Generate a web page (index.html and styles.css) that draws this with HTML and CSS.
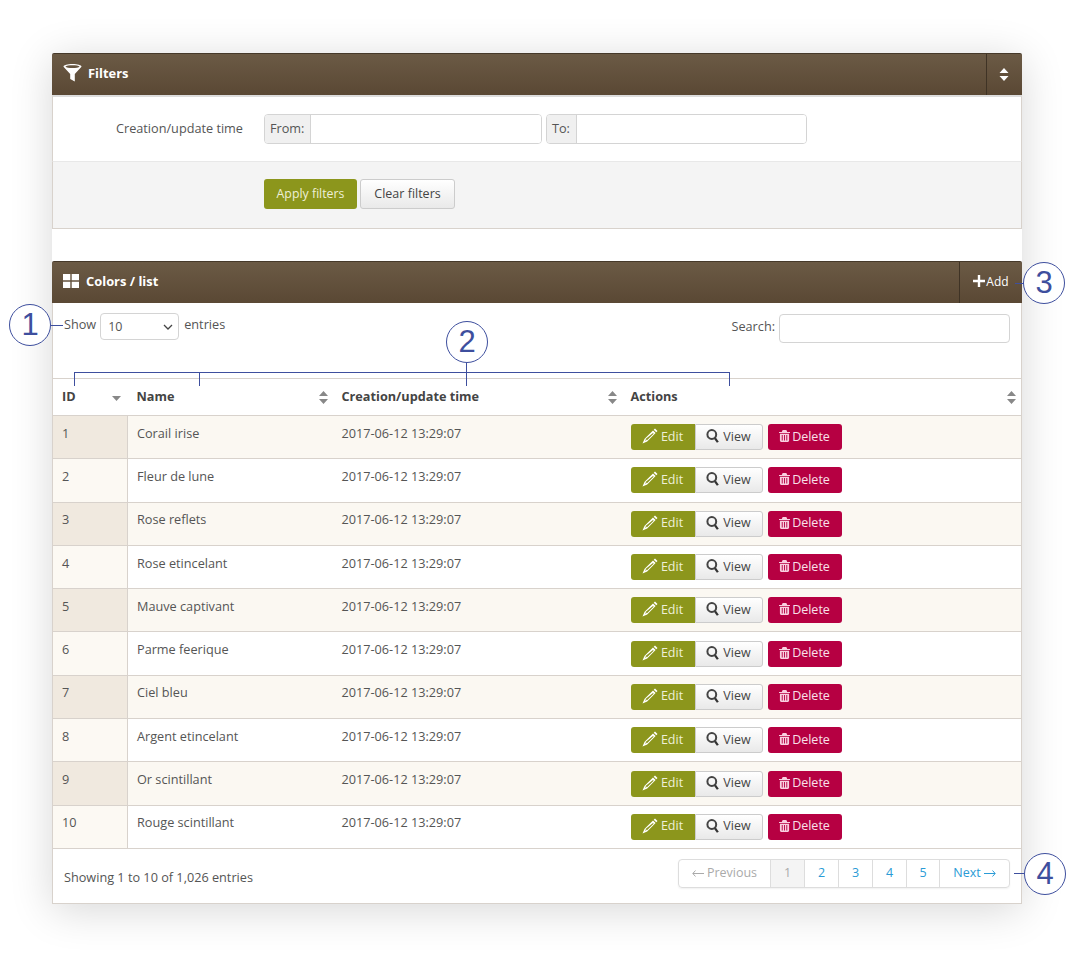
FILE: index.html
```html
<!DOCTYPE html>
<html lang="en">
<head>
    <meta charset="UTF-8">
    <title>Colors / list</title>
    <link rel="stylesheet" href="styles.css">
</head>
<body>
    <svg class="defs" width="0" height="0">
        <symbol id="i-sort" viewBox="0 0 9 13"><path d="M4.500 0 9 5H0zM4.500 13 0 8h9z"/></symbol>
        <symbol id="i-pencil" viewBox="0 0 16 16"><path d="M13 .5 15.500 3 14.300 4.300 11.700 1.800zM11 2.500 13.600 5 5.200 13.400 .5 15.500 2.600 10.800zM3.600 10.900 5 12.300 11.600 5.700 11 5.100zM2.900 12.900 4.400 12 3.800 11.400z" fill-rule="evenodd"/></symbol>
        <symbol id="i-search" viewBox="0 0 14 14"><circle cx="5.800" cy="5.500" r="4.400" fill="none" stroke="currentColor" stroke-width="2"/><path d="M8 9.800 10 8.700 12.800 12.700 10.900 13.800z"/></symbol>
        <symbol id="i-trash" viewBox="0 0 12 13"><path d="M4 0h4l1 2h3v1.300H0V2h3zM1 4h10v7.500c0 .8-.6 1.500-1.400 1.500H2.400C1.600 13 1 12.300 1 11.500zM3 5.500V11.500h1V5.500zM5.500 5.500V11.500h1V5.500zM8 5.500V11.500h1V5.500z" fill-rule="evenodd"/></symbol>
    </svg>

    <div class="page">
        <div class="panel">
            <div class="bar">
                <div class="bar-title">
                    <svg class="bar-icon" width="19" height="18" viewBox="0 0 19 18"><path d="M9.500 0C14.500 0 18.500 1.100 18.500 2.700L11.800 10V17.500L7.200 15V10L.5 2.700C.5 1.100 4.500 0 9.500 0zM9.500 1.300C6 1.300 3.300 1.800 2.400 2.700 3.300 3.600 6 4.100 9.500 4.100S15.700 3.600 16.600 2.700C15.700 1.800 13 1.300 9.500 1.300z" fill-rule="evenodd"/></svg>
                    Filters
                </div>
                <div class="bar-action toggle"><svg width="10" height="13"><use href="#i-sort"/></svg></div>
            </div>
            <div class="filter-row">
                <label class="filter-label">Creation/update time</label>
                <div class="input-group from">
                    <span class="addon">From:</span>
                    <input type="text">
                </div>
                <div class="input-group to">
                    <span class="addon">To:</span>
                    <input type="text">
                </div>
            </div>
            <div class="filter-actions">
                <button class="btn btn-olive btn-apply">Apply filters</button>
                <button class="btn btn-plain btn-clear">Clear filters</button>
            </div>
        </div>

        <div class="panel list-panel">
            <div class="bar">
                <div class="bar-title">
                    <svg class="bar-icon grid" width="16" height="14" viewBox="0 0 16 14"><path d="M0 0h7.300v6.300H0zM8.700 0H16v6.300H8.700zM0 7.700h7.300V14H0zM8.700 7.700H16V14H8.700z"/></svg>
                    Colors / list
                </div>
                <div class="bar-action add">
                    <svg width="12" height="12" viewBox="0 0 12 12"><path d="M4.800 0h2.400v4.800H12v2.400H7.200V12H4.800V7.200H0V4.800h4.800z"/></svg>
                    Add
                </div>
            </div>

            <div class="table-tools">
                <div class="length">
                    Show
                    <div class="fake-select">10
                        <svg width="10" height="6" viewBox="0 0 10 6"><path d="M1 1l4 4 4-4" fill="none" stroke="#444" stroke-width="1.300"/></svg>
                    </div>
                    entries
                </div>
                <div class="search">Search: <input type="text"></div>
            </div>

            <table class="list">
                <thead>
                    <tr>
                        <th class="col-id">ID<svg class="sort" width="9" height="13"><path d="M0 5h9L4.500 10z" fill="#888"/></svg></th>
                        <th class="col-name">Name<svg class="sort" width="9" height="13"><use href="#i-sort"/></svg></th>
                        <th class="col-time">Creation/update time<svg class="sort" width="9" height="13"><use href="#i-sort"/></svg></th>
                        <th>Actions<svg class="sort" width="9" height="13"><use href="#i-sort"/></svg></th>
                    </tr>
                </thead>
                <tbody>
                    <tr><td>1</td><td>Corail irise</td><td>2017-06-12 13:29:07</td><td class="actions"><span class="btn-group"><a class="btn btn-olive"><svg width="16" height="16"><use href="#i-pencil"/></svg> Edit</a><a class="btn btn-plain"><svg width="14" height="14"><use href="#i-search"/></svg> View</a></span><a class="btn btn-red"><svg width="11" height="12"><use href="#i-trash"/></svg> Delete</a></td></tr>
                    <tr><td>2</td><td>Fleur de lune</td><td>2017-06-12 13:29:07</td><td class="actions"><span class="btn-group"><a class="btn btn-olive"><svg width="16" height="16"><use href="#i-pencil"/></svg> Edit</a><a class="btn btn-plain"><svg width="14" height="14"><use href="#i-search"/></svg> View</a></span><a class="btn btn-red"><svg width="11" height="12"><use href="#i-trash"/></svg> Delete</a></td></tr>
                    <tr><td>3</td><td>Rose reflets</td><td>2017-06-12 13:29:07</td><td class="actions"><span class="btn-group"><a class="btn btn-olive"><svg width="16" height="16"><use href="#i-pencil"/></svg> Edit</a><a class="btn btn-plain"><svg width="14" height="14"><use href="#i-search"/></svg> View</a></span><a class="btn btn-red"><svg width="11" height="12"><use href="#i-trash"/></svg> Delete</a></td></tr>
                    <tr><td>4</td><td>Rose etincelant</td><td>2017-06-12 13:29:07</td><td class="actions"><span class="btn-group"><a class="btn btn-olive"><svg width="16" height="16"><use href="#i-pencil"/></svg> Edit</a><a class="btn btn-plain"><svg width="14" height="14"><use href="#i-search"/></svg> View</a></span><a class="btn btn-red"><svg width="11" height="12"><use href="#i-trash"/></svg> Delete</a></td></tr>
                    <tr><td>5</td><td>Mauve captivant</td><td>2017-06-12 13:29:07</td><td class="actions"><span class="btn-group"><a class="btn btn-olive"><svg width="16" height="16"><use href="#i-pencil"/></svg> Edit</a><a class="btn btn-plain"><svg width="14" height="14"><use href="#i-search"/></svg> View</a></span><a class="btn btn-red"><svg width="11" height="12"><use href="#i-trash"/></svg> Delete</a></td></tr>
                    <tr><td>6</td><td>Parme feerique</td><td>2017-06-12 13:29:07</td><td class="actions"><span class="btn-group"><a class="btn btn-olive"><svg width="16" height="16"><use href="#i-pencil"/></svg> Edit</a><a class="btn btn-plain"><svg width="14" height="14"><use href="#i-search"/></svg> View</a></span><a class="btn btn-red"><svg width="11" height="12"><use href="#i-trash"/></svg> Delete</a></td></tr>
                    <tr><td>7</td><td>Ciel bleu</td><td>2017-06-12 13:29:07</td><td class="actions"><span class="btn-group"><a class="btn btn-olive"><svg width="16" height="16"><use href="#i-pencil"/></svg> Edit</a><a class="btn btn-plain"><svg width="14" height="14"><use href="#i-search"/></svg> View</a></span><a class="btn btn-red"><svg width="11" height="12"><use href="#i-trash"/></svg> Delete</a></td></tr>
                    <tr><td>8</td><td>Argent etincelant</td><td>2017-06-12 13:29:07</td><td class="actions"><span class="btn-group"><a class="btn btn-olive"><svg width="16" height="16"><use href="#i-pencil"/></svg> Edit</a><a class="btn btn-plain"><svg width="14" height="14"><use href="#i-search"/></svg> View</a></span><a class="btn btn-red"><svg width="11" height="12"><use href="#i-trash"/></svg> Delete</a></td></tr>
                    <tr><td>9</td><td>Or scintillant</td><td>2017-06-12 13:29:07</td><td class="actions"><span class="btn-group"><a class="btn btn-olive"><svg width="16" height="16"><use href="#i-pencil"/></svg> Edit</a><a class="btn btn-plain"><svg width="14" height="14"><use href="#i-search"/></svg> View</a></span><a class="btn btn-red"><svg width="11" height="12"><use href="#i-trash"/></svg> Delete</a></td></tr>
                    <tr><td>10</td><td>Rouge scintillant</td><td>2017-06-12 13:29:07</td><td class="actions"><span class="btn-group"><a class="btn btn-olive"><svg width="16" height="16"><use href="#i-pencil"/></svg> Edit</a><a class="btn btn-plain"><svg width="14" height="14"><use href="#i-search"/></svg> View</a></span><a class="btn btn-red"><svg width="11" height="12"><use href="#i-trash"/></svg> Delete</a></td></tr>
                </tbody>
            </table>

            <div class="table-foot">
                <div class="info">Showing 1 to 10 of 1,026 entries</div>
                <ul class="pagination">
                    <li class="disabled prev"><svg class="arrow" width="12" height="7" viewBox="0 0 12 7"><path d="M12 3.500H1M3.500 .5 .8 3.500 3.500 6.500" fill="none" stroke="currentColor"/></svg> Previous</li>
                    <li class="current">1</li>
                    <li>2</li>
                    <li>3</li>
                    <li>4</li>
                    <li class="five">5</li>
                    <li class="next">Next <svg class="arrow" width="12" height="7" viewBox="0 0 12 7"><path d="M0 3.500H11M8.500 .5 11.200 3.500 8.500 6.500" fill="none" stroke="currentColor"/></svg></li>
                </ul>
            </div>
        </div>

        <!-- numbered callouts drawn over the screenshot -->
        <div class="callout c1">1</div>
        <div class="lead l1"></div>
        <div class="callout c2">2</div>
        <div class="bracket"></div>
        <div class="tick t1"></div>
        <div class="tick t2"></div>
        <div class="callout c3">3</div>
        <div class="lead l3"></div>
        <div class="callout c4">4</div>
        <div class="lead l4"></div>
    </div>
</body>
</html>
```

FILE: styles.css
```css
* {
    box-sizing: border-box;
}

body {
    margin: 0;
    background: #fff;
    font-family: "Open Sans", Arial, sans-serif;
    font-size: 12.7px;
    color: #555;
}

.defs {
    position: absolute;
}

.page {
    position: relative;
    width: 970px;
    margin: 53px 0 60px 52px;
    background: #fff;
    box-shadow: 0 6px 40px rgba(0, 0, 0, 0.16);
}

.bar {
    display: flex;
    justify-content: space-between;
    height: 42px;
    background: linear-gradient(#6b5a45, #5a4834);
    border-top: 1px solid #46392a;
    color: #fff;
    fill: #fff;
    font-weight: 700;
    border-radius: 2px 2px 0 0;
}

.bar-title {
    display: flex;
    align-items: center;
    padding: 0 0 3px 11px;
    font-size: 12.900px;
}

.bar-icon {
    margin-right: 6px;
}

.bar-icon.grid {
    margin-right: 7px;
}

.bar-action {
    display: flex;
    align-items: center;
    justify-content: center;
    padding-bottom: 3px;
    border-left: 1px solid #3f3325;
}

.toggle {
    width: 36px;
    padding: 0 2px 1px 0;
    fill: #fff;
}

.filter-row {
    display: flex;
    align-items: center;
    height: 67px;
    border-left: 1px solid #d8d2cc;
    border-right: 1px solid #d8d2cc;
    border-top: 2px solid #ddd;
    border-bottom: 1px solid #e8e8e8;
}

.filter-label {
    width: 190px;
    margin: 0 21px 2px 0;
    text-align: right;
}

.input-group {
    display: flex;
    height: 30px;
    margin-right: 4px;
    border: 1px solid #d4d4d4;
    border-radius: 4px;
    overflow: hidden;
}

.input-group.from {
    width: 278px;
}

.input-group.to {
    width: 261px;
}

.addon {
    display: flex;
    align-items: center;
    padding: 0 6px 2px 5px;
    background: #f0f0f0;
    border-right: 1px solid #d4d4d4;
}

input {
    border: none;
    outline: none;
    flex: 1;
    min-width: 0;
    background: #fff;
}

.filter-actions {
    height: 67px;
    padding: 17px 0 0 211px;
    background: #f4f4f4;
    border: 1px solid #d8d2cc;
    border-top: none;
    display: flex;
    align-items: flex-start;
    gap: 3px;
}

.btn {
    display: inline-flex;
    align-items: center;
    justify-content: center;
    font-family: inherit;
    font-size: 12.500px;
    border-radius: 3px;
    border: 1px solid transparent;
    height: 26px;
    padding: 0 0 2px;
    gap: 3px;
}

.btn-apply,
.btn-clear {
    height: 30px;
    padding-bottom: 1px;
}

.btn-apply {
    width: 93px;
    font-size: 12.300px;
}

.btn-clear {
    width: 95px;
    border-color: #c4c4c4;
    color: #444;
}

.btn-olive {
    background: #8c961c;
    color: #eef0d8;
    fill: #fff;
}

.btn-plain {
    background: linear-gradient(#fff, #e9e9e9);
    border-color: #ccc;
    color: #444;
    fill: #333;
}

.btn-red {
    background: #b60042;
    color: #f8e0ea;
    fill: #f8d0e0;
    width: 74px;
    gap: 2px;
}

.list-panel {
    margin-top: 32px;
}

.add {
    width: 63px;
    gap: 1px;
    font-size: 12px;
    font-weight: 400;
}

.table-tools {
    display: flex;
    justify-content: space-between;
    height: 75px;
    padding: 10px 11px 0 11px;
    border-left: 1px solid #d8d2cc;
    border-right: 1px solid #d8d2cc;
}

.length {
    display: flex;
    align-items: flex-start;
    line-height: 23px;
    gap: 4px;
}

.fake-select {
    display: flex;
    align-items: center;
    justify-content: space-between;
    width: 79px;
    height: 27px;
    padding: 0 5px 0 7px;
    border: 1px solid #d4d4d4;
    border-radius: 4px;
    font-size: 12.500px;
    margin-right: 1px;
}

.search {
    display: flex;
    align-items: flex-start;
    gap: 4px;
    line-height: 27px;
}

.search input {
    width: 231px;
    height: 29px;
    flex: none;
    margin-top: 1px;
    border: 1px solid #d4d4d4;
    border-radius: 4px;
}

.list {
    width: 100%;
    border-collapse: collapse;
    table-layout: fixed;
    border-left: 1px solid #d8d2cc;
    border-right: 1px solid #d8d2cc;
}

.list th {
    position: relative;
    height: 37px;
    padding: 0 9px 2px;
    text-align: left;
    font-size: 12.700px;
    font-weight: 700;
    color: #444;
    border-top: 1px solid #d8d2cc;
    border-bottom: 1px solid #d8d2cc;
}

.col-id {
    width: 75px;
}

.col-name {
    width: 205px;
}

.col-time {
    width: 289px;
}

.sort {
    position: absolute;
    right: 5px;
    top: 12px;
    fill: #888;
}

.col-id .sort {
    right: 7px;
}

.list td {
    height: 43.300px;
    padding: 0 9px 9px;
    border-bottom: 1px solid #d8d2cc;
    color: #555;
}

.list td:first-child {
    border-right: 1px solid #d8d2cc;
    background: #fcf9f3;
}

.list tbody tr:nth-child(odd) {
    background: #fbf8f2;
}

.list tbody tr:nth-child(odd) td:first-child {
    background: #f0e9df;
}

.list td.actions {
    padding: 0 9px;
}

.actions > .btn,
.btn-group {
    vertical-align: middle;
}

.btn-group {
    display: inline-flex;
    margin-right: 5px;
}

.btn-group .btn-olive {
    width: 64px;
    border-radius: 3px 0 0 3px;
}

.btn-group .btn-plain {
    width: 68px;
    border-radius: 0 3px 3px 0;
}

.table-foot {
    display: flex;
    justify-content: space-between;
    height: 55px;
    padding: 10px 11px 0 11px;
    border: 1px solid #d8d2cc;
    border-top: none;
}

.info {
    padding-top: 9px;
}

.pagination {
    display: flex;
    margin: 0;
    padding: 0;
    list-style: none;
    height: 29px;
    border: 1px solid #ddd;
    border-radius: 4px;
    font-size: 12.500px;
    color: #2a9bd6;
    box-shadow: 0 1px 2px rgba(0, 0, 0, 0.06);
}

.pagination li {
    display: flex;
    align-items: center;
    justify-content: center;
    gap: 3px;
    width: 34px;
    padding-bottom: 1px;
    border-right: 1px solid #ddd;
}

.pagination .prev {
    width: 92px;
}

.pagination .five {
    width: 33px;
}

.pagination .next {
    width: 69px;
    border-right: none;
}

.arrow {
    margin-top: 2px;
}

.disabled {
    color: #aaa;
}

.pagination .current {
    background: #f4f4f4;
    color: #aaa;
}

.callout {
    position: absolute;
    display: flex;
    align-items: center;
    justify-content: center;
    width: 42px;
    height: 42px;
    background: #fff;
    border: 1px solid #3e4f9e;
    border-radius: 50%;
    font-family: "Liberation Sans", Arial, sans-serif;
    font-size: 31px;
    color: #3e4f9e;
}

.c1 {
    left: -43px;
    top: 251px;
}

.c2 {
    left: 394px;
    top: 268px;
}

.c3 {
    left: 971px;
    top: 209px;
}

.c4 {
    left: 972px;
    top: 800px;
}

.lead,
.bracket,
.tick {
    position: absolute;
    background: #3e4f9e;
}

.lead {
    height: 1px;
}

.l1 {
    left: -1px;
    top: 272px;
    width: 12px;
}

.l3 {
    left: 963px;
    top: 230px;
    width: 9px;
}

.l4 {
    left: 962px;
    top: 820px;
    width: 10px;
}

.bracket {
    left: 22px;
    top: 319px;
    width: 656px;
    height: 14px;
    background: none;
    border: 1px solid #3e4f9e;
    border-bottom: none;
}

.tick {
    width: 1px;
}

.t1 {
    left: 147px;
    top: 319px;
    height: 14px;
}

.t2 {
    left: 414px;
    top: 310px;
    height: 23px;
}
```
